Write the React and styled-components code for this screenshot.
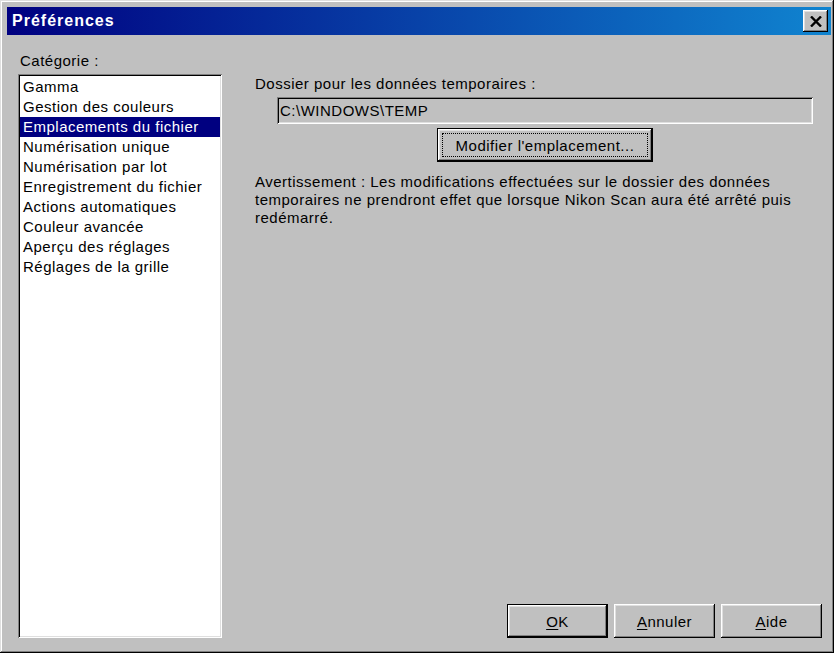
import React from "react";
import styled, { createGlobalStyle } from "styled-components";

const categories = [
  "Gamma",
  "Gestion des couleurs",
  "Emplacements du fichier",
  "Numérisation unique",
  "Numérisation par lot",
  "Enregistrement du fichier",
  "Actions automatiques",
  "Couleur avancée",
  "Aperçu des réglages",
  "Réglages de la grille",
];

export default function App() {
  return (
    <>
      <GlobalStyle />
      <Window>
        <TitleBar>
          <Title>Préférences</Title>
          <CloseButton aria-label="Fermer">
            <svg width="12" height="11" viewBox="0 0 12 11">
              <path d="M1 0.5 L11 10.5 M11 0.5 L1 10.5" stroke="#000" strokeWidth="2.4" />
            </svg>
          </CloseButton>
        </TitleBar>

        <Body>
          <Sidebar>
            <Label>Catégorie :</Label>
            <List>
              {categories.map((c, i) => (
                <ListItem key={c} $selected={i === 2}>
                  {c}
                </ListItem>
              ))}
            </List>
          </Sidebar>

          <Panel>
            <FolderLabel>Dossier pour les données temporaires :</FolderLabel>
            <PathField>{"C:\\WINDOWS\\TEMP"}</PathField>
            <CenterRow>
              <Button $default $wide>
                <Focus>Modifier l'emplacement...</Focus>
              </Button>
            </CenterRow>
            <Warning>
              Avertissement : Les modifications effectuées sur le dossier des données
              <br />
              temporaires ne prendront effet que lorsque Nikon Scan aura été arrêté puis
              <br />
              redémarré.
            </Warning>

            <Footer>
              <Button $default>
                <u>O</u>K
              </Button>
              <Button>
                <u>A</u>nnuler
              </Button>
              <Button>
                <u>A</u>ide
              </Button>
            </Footer>
          </Panel>
        </Body>
      </Window>
    </>
  );
}

const GlobalStyle = createGlobalStyle`
  html, body {
    margin: 0;
    padding: 0;
    background: #c0c0c0;
  }
  * {
    box-sizing: border-box;
  }
`;

const bevel =
  "inset -1px -1px #000, inset 1px 1px #fff, inset -2px -2px #808080, inset 2px 2px #dfdfdf";
const sunken =
  "inset 1px 1px #808080, inset -1px -1px #fff, inset 2px 2px #000, inset -2px -2px #dfdfdf";

const Window = styled.div`
  width: 834px;
  height: 653px;
  display: flex;
  flex-direction: column;
  padding: 7px 3px 4px 7px;
  background: #c0c0c0;
  font-family: "Liberation Sans", Arial, sans-serif;
  font-size: 15px;
  letter-spacing: 0.5px;
  color: #000;
  box-shadow: inset -1px -1px #000, inset 1px 1px #dfdfdf,
    inset -2px -2px #808080, inset 2px 2px #fff;
`;

const TitleBar = styled.div`
  height: 28px;
  display: flex;
  align-items: center;
  justify-content: space-between;
  padding: 0 3px 0 5px;
  background: linear-gradient(to right, #000080, #1084d0);
`;

const Title = styled.div`
  color: #fff;
  font-weight: bold;
  font-size: 16px;
  letter-spacing: 1px;
`;

const CloseButton = styled.div`
  width: 25px;
  height: 22px;
  display: flex;
  align-items: center;
  justify-content: center;
  background: #c0c0c0;
  box-shadow: ${bevel};
`;

const Body = styled.div`
  flex: 1;
  display: grid;
  grid-template-columns: 204px 1fr;
  column-gap: 33px;
  padding: 17px 9px 11px 11px;
  min-height: 0;
`;

const Sidebar = styled.div`
  display: flex;
  flex-direction: column;
  min-height: 0;
`;

const Label = styled.div`
  line-height: 17px;
  padding-left: 2px;
  margin-bottom: 5px;
`;

const List = styled.div`
  flex: 1;
  background: #fff;
  padding: 3px 2px 2px;
  box-shadow: ${sunken};
`;

const ListItem = styled.div`
  height: 20px;
  line-height: 20px;
  padding-left: 3px;
  white-space: nowrap;
  background: ${(p) => (p.$selected ? "#000080" : "transparent")};
  color: ${(p) => (p.$selected ? "#fff" : "#000")};
`;

const Panel = styled.div`
  display: flex;
  flex-direction: column;
  min-height: 0;
`;

const FolderLabel = styled.div`
  margin-top: 23px;
  line-height: 17px;
`;

const PathField = styled.div`
  height: 27px;
  margin: 5px 9px 0 22px;
  padding: 0 3px;
  display: flex;
  align-items: center;
  background: #c0c0c0;
  box-shadow: ${sunken};
`;

const CenterRow = styled.div`
  display: flex;
  justify-content: center;
  margin: 4px 9px 0 22px;
`;

const Button = styled.div`
  width: ${(p) => (p.$wide ? "216px" : "101px")};
  height: 34px;
  display: flex;
  align-items: center;
  justify-content: center;
  background: #c0c0c0;
  border: ${(p) => (p.$default ? "1px solid #000" : "none")};
  box-shadow: ${bevel};

  u {
    text-decoration: underline;
    text-underline-offset: 2px;
  }
`;

const Focus = styled.span`
  display: flex;
  align-items: center;
  justify-content: center;
  width: calc(100% - 8px);
  height: calc(100% - 8px);
  border: 1px dotted #000;
`;

const Warning = styled.div`
  margin-top: 11px;
  line-height: 18px;
  white-space: nowrap;
`;

const Footer = styled.div`
  margin-top: auto;
  display: flex;
  justify-content: flex-end;
  gap: 6px;
`;
